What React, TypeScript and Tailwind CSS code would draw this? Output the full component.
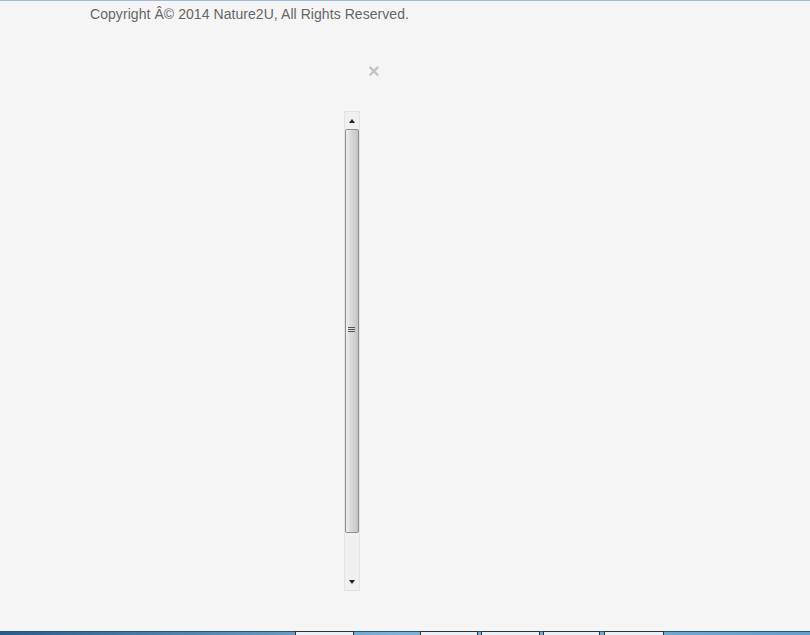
import React from "react";

const tabs = [
  { left: 295, width: 59 },
  { left: 420, width: 58 },
  { left: 481, width: 59 },
  { left: 543, width: 57 },
  { left: 604, width: 60 },
];

const ScrollBar = () => (
  <div className="flex h-[480px] w-[16px] flex-col border border-[#e3e3e3] bg-[#f0f0f0]">
    <div className="flex h-[17px] items-center justify-center">
      <div className="h-0 w-0 border-x-[3px] border-b-[4px] border-x-transparent border-b-[#222]" />
    </div>
    <div className="relative h-[404px] rounded-[2px] border border-[#8f8f8f] bg-gradient-to-r from-[#eeeeee] via-[#d6d6d6] to-[#c4c4c4]">
      <div className="absolute left-[2px] top-[197px] flex w-[7px] flex-col gap-[1px]">
        <div className="h-[1px] bg-[#555]" />
        <div className="h-[1px] bg-[#555]" />
        <div className="h-[1px] bg-[#555]" />
      </div>
    </div>
    <div className="flex-1" />
    <div className="flex h-[17px] items-center justify-center">
      <div className="h-0 w-0 border-x-[3px] border-t-[4px] border-x-transparent border-t-[#222]" />
    </div>
  </div>
);

export default function App() {
  return (
    <div className="flex h-[635px] w-[810px] flex-col overflow-hidden border-t border-[#9fbad6] bg-[#f5f5f5] font-['Liberation_Sans',Arial,sans-serif]">
      <div className="flex-1">
        <p className="pl-[90px] pt-[5px] text-[14px] leading-[17px] tracking-[0.06px] text-[#666]">
          Copyright Â© 2014 Nature2U, All Rights Reserved.
        </p>
        <div className="pl-[368px] pt-[40px] text-[20px] font-bold leading-[16px] text-[#c4c4c4]">×</div>
        <div className="pl-[344px] pt-[32px]">
          <ScrollBar />
        </div>
      </div>
      <div className="relative h-[4px] border-t border-[#2c4f6e] bg-gradient-to-r from-[#1f5f8f] via-[#7ab6dc] to-[#5fa2d0]">
        {tabs.map((t) => (
          <div
            key={t.left}
            className="absolute top-[-1px] h-[4px] border-x border-t border-[#333] bg-[#e8f1f8]"
            style={{ left: t.left, width: t.width }}
          />
        ))}
      </div>
    </div>
  );
}
